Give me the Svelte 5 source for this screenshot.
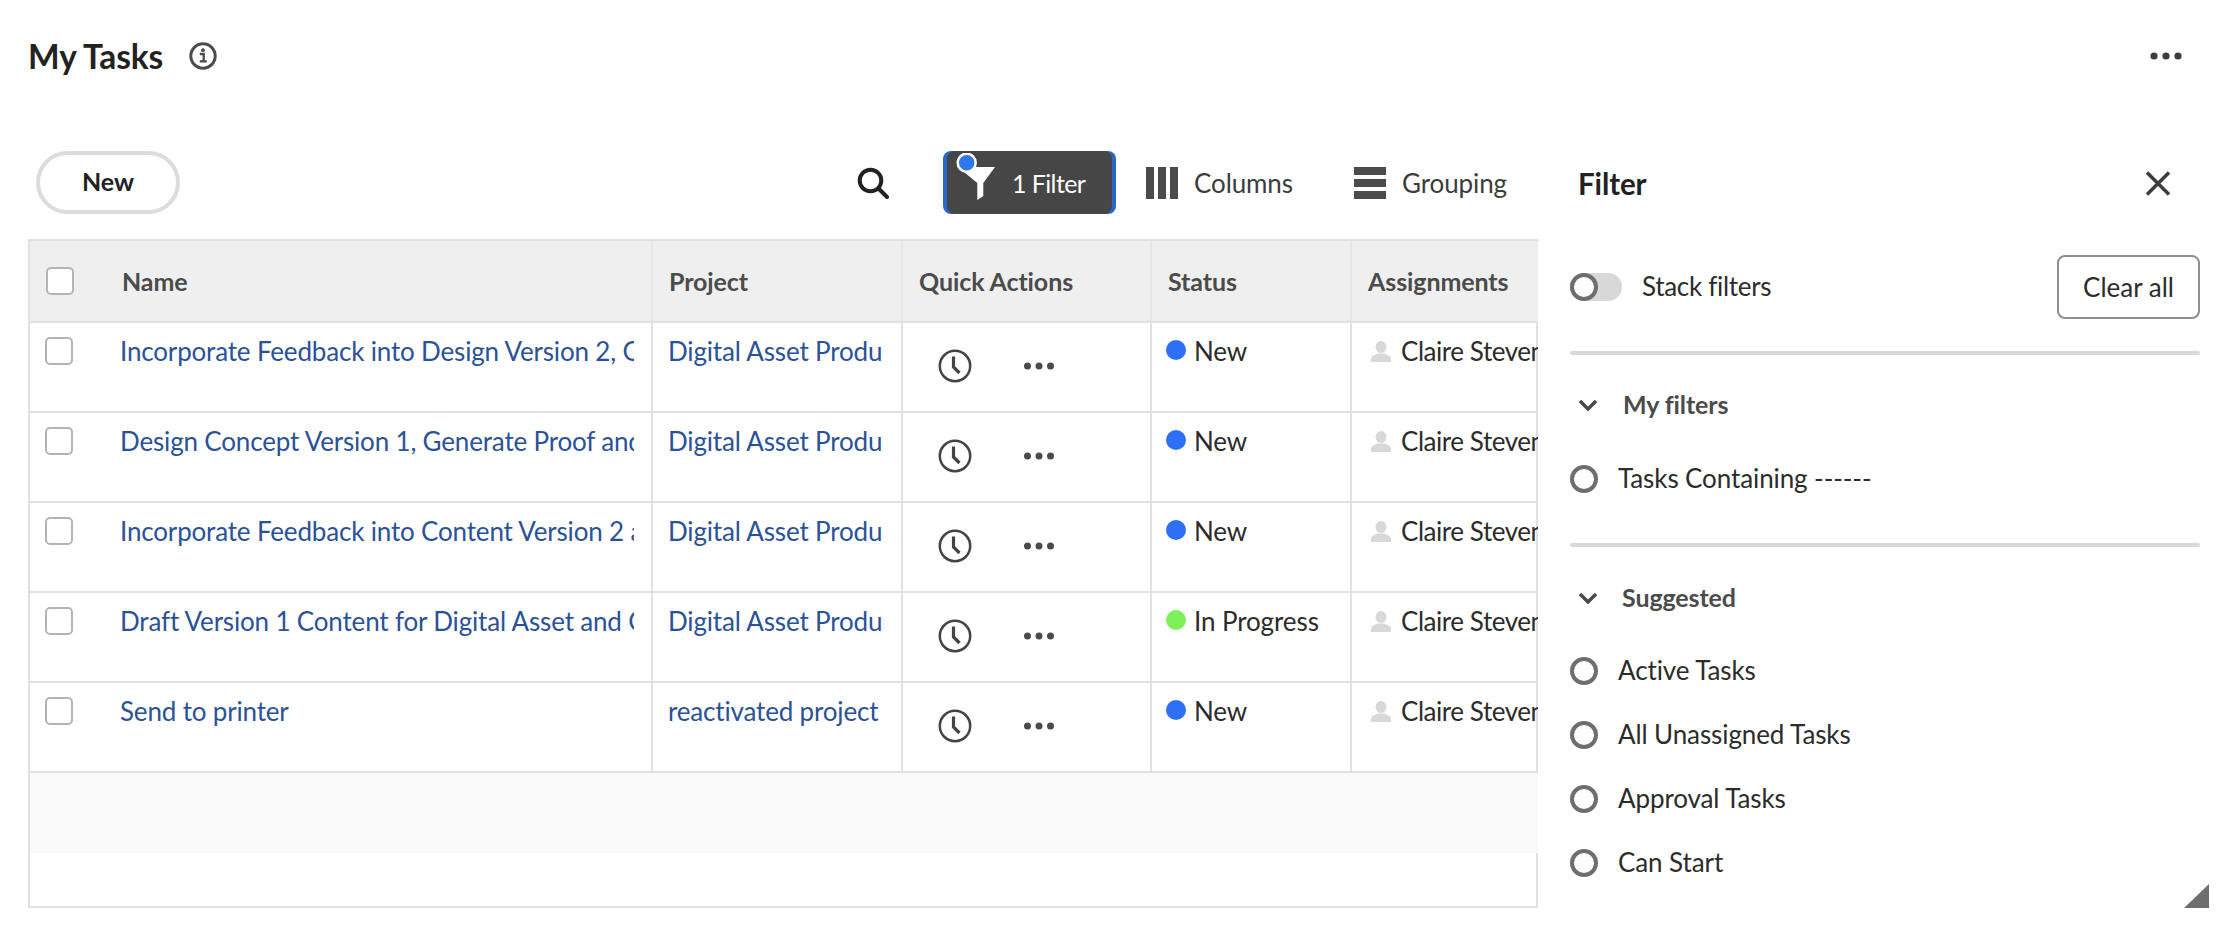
<script>
  const rows = [
    { name: "Incorporate Feedback into Design Version 2, Generate Proof", project: "Digital Asset Production", status: "New" },
    { name: "Design Concept Version 1, Generate Proof and Review", project: "Digital Asset Production", status: "New" },
    { name: "Incorporate Feedback into Content Version 2 and Finalize", project: "Digital Asset Production", status: "New" },
    { name: "Draft Version 1 Content for Digital Asset and Get Review", project: "Digital Asset Production", status: "In Progress" },
    { name: "Send to printer", project: "reactivated project", status: "New" }
  ];
  const suggested = ["Active Tasks", "All Unassigned Tasks", "Approval Tasks", "Can Start"];
</script>

<div class="page">
  <header class="top">
    <div class="heading">
      <h1>My Tasks</h1>
      <svg class="info" width="28" height="28" viewBox="0 0 28 28" fill="none" stroke="#4b4b4b">
        <circle cx="14" cy="14" r="12.200" stroke-width="3" />
        <path d="M10.800 12h3.900v7M10.800 19.400h7" stroke-width="2.300" />
        <circle cx="14" cy="8.200" r="1.900" fill="#4b4b4b" stroke="none" />
      </svg>
    </div>
    <svg class="more" width="32" height="8" viewBox="0 0 32 8" fill="#3c3c3c">
      <circle cx="4" cy="4" r="3.6" /><circle cx="16" cy="4" r="3.6" /><circle cx="28" cy="4" r="3.6" />
    </svg>
  </header>

  <div class="body">
    <main class="main">
      <div class="toolbar">
        <button class="new">New</button>
        <div class="tools">
          <svg class="search" width="32" height="32" viewBox="0 0 32 32" fill="none" stroke="#222" stroke-width="4">
            <circle cx="13.5" cy="13.5" r="10.8" />
            <path d="M21.5 21.5 30 30" stroke-linecap="round" />
          </svg>
          <div class="filter-btn">
            <div class="filter-inner">
              <svg class="funnel" width="42" height="50" viewBox="0 0 42 50">
                <path d="M3 14h37L28.300 30v13l-6 4V30z" fill="#fff" />
                <circle cx="11.700" cy="9.700" r="9" fill="#2e77ee" stroke="#fff" stroke-width="2.500" />
              </svg>
              <span>1 Filter</span>
            </div>
          </div>
          <div class="tool columns">
            <svg width="32" height="32" viewBox="0 0 32 32" fill="#4b4b4b">
              <rect x="0" width="8" height="32" /><rect x="12" width="8" height="32" /><rect x="24" width="8" height="32" />
            </svg>
            <span>Columns</span>
          </div>
          <div class="tool grouping">
            <svg width="32" height="32" viewBox="0 0 32 32" fill="#4b4b4b">
              <rect y="0" width="32" height="8" /><rect y="12" width="32" height="8" /><rect y="24" width="32" height="8" />
            </svg>
            <span>Grouping</span>
          </div>
        </div>
      </div>

      <div class="table-clip">
        <div class="table">
          <div class="row head">
            <div class="cell first"><span class="check"></span><span class="label">Name</span></div>
            <div class="cell">Project</div>
            <div class="cell">Quick Actions</div>
            <div class="cell">Status</div>
            <div class="cell">Assignments</div>
          </div>
          {#each rows as row}
            <div class="row">
              <div class="cell first">
                <span class="check"></span>
                <a class="link" href="#task">{row.name}</a>
              </div>
              <div class="cell project"><a class="link" href="#project">{row.project}</a></div>
              <div class="cell actions">
                <svg width="34" height="34" viewBox="0 0 34 34" fill="none" stroke="#444">
                  <circle cx="17" cy="17" r="15.200" stroke-width="2.500" />
                  <path d="M15.500 7.500v10.500l6 6" stroke-width="3.200" />
                </svg>
                <svg class="dots" width="32" height="8" viewBox="0 0 32 8" fill="#4b4b4b">
                  <circle cx="4.500" cy="4" r="3.500" /><circle cx="16" cy="4" r="3.500" /><circle cx="27.500" cy="4" r="3.500" />
                </svg>
              </div>
              <div class="cell status">
                <span class="dot" class:green={row.status === "In Progress"}></span>{row.status}
              </div>
              <div class="cell assignee">
                <svg width="20" height="21" viewBox="0 0 20 21" fill="#d8d8d8">
                  <ellipse cx="10" cy="6" rx="5.500" ry="6" />
                  <path d="M0 21v-3c0-3 4-4 6.500-5.500h7C16 14 20 15 20 18v3z" />
                </svg>
                Claire Stevens
              </div>
            </div>
          {/each}
          <div class="band"></div>
        </div>
      </div>
    </main>

    <aside class="panel">
      <div class="panel-head">
        <h2>Filter</h2>
        <svg width="26" height="25" viewBox="0 0 26 25" fill="none" stroke="#3c3c3c" stroke-width="3.500">
          <path d="M2 1.500 24 23.500M24 1.500 2 23.500" />
        </svg>
      </div>
      <div class="stack-row">
        <span class="toggle"><span class="knob"></span></span>
        <span class="stack-label">Stack filters</span>
        <button class="clear">Clear all</button>
      </div>

      <div class="rule"></div>
      <div class="section-title">
        <svg width="20" height="12" viewBox="0 0 20 12" fill="none" stroke="#4b4b4b" stroke-width="3.500">
          <path d="M2 2l8 8 8-8" />
        </svg>
        <span>My filters</span>
      </div>
      <div class="radios">
        <div class="radio-item"><span class="radio"></span><span class="radio-text">Tasks Containing ------</span></div>
      </div>

      <div class="rule"></div>
      <div class="section-title second">
        <svg width="20" height="12" viewBox="0 0 20 12" fill="none" stroke="#4b4b4b" stroke-width="3.500">
          <path d="M2 2l8 8 8-8" />
        </svg>
        <span>Suggested</span>
      </div>
      <div class="radios">
        {#each suggested as item}
          <div class="radio-item"><span class="radio"></span><span class="radio-text">{item}</span></div>
        {/each}
      </div>
      <span class="resize"></span>
    </aside>
  </div>
</div>

<style>
  :global(body) {
    margin: 0;
    background: #fff;
    overflow: hidden;
  }

  .page {
    width: 2230px;
    height: 932px;
    overflow: hidden;
    font-family: "Lato", "Open Sans", sans-serif;
    font-size: 26px;
    letter-spacing: -0.1px;
    color: #2c2c2c;
  }

  .top {
    height: 112px;
    display: flex;
    align-items: center;
    justify-content: space-between;
    padding: 0 48px 0 28px;
  }
  .heading {
    display: flex;
    align-items: center;
    gap: 26px;
  }
  h1 {
    margin: 0;
    font-size: 33.5px;
    font-weight: 700;
    color: #222;
  }

  .body {
    margin-top: 39px;
    display: grid;
    grid-template-columns: 1538px 692px;
  }

  .main {
    padding-left: 28px;
    min-width: 0;
  }

  .toolbar {
    height: 63px;
    margin-bottom: 25px;
    padding-right: 29px;
    display: flex;
    align-items: center;
    justify-content: space-between;
  }
  .new {
    margin-left: 8px;
    width: 144px;
    height: 63px;
    padding-bottom: 4px;
    border: 4px solid #dcdcdc;
    border-radius: 32px;
    background: #fff;
    font: 700 25px "Lato", sans-serif;
    color: #222;
  }
  .tools {
    display: flex;
    align-items: center;
  }
  .filter-btn {
    margin-left: 54px;
    width: 173px;
    height: 63px;
    padding: 0 4px;
    box-sizing: border-box;
    background: #2a66c8;
    border-radius: 8px;
    overflow: hidden;
  }
  .filter-inner {
    height: 100%;
    background: #464646;
    border-radius: 8px;
    color: #fff;
    display: flex;
    align-items: center;
    position: relative;
    padding-left: 65px;
    box-sizing: border-box;
    font-size: 25px;
    letter-spacing: -0.6px;
  }
  .funnel {
    position: absolute;
    left: 8px;
    top: 2px;
  }
  .tool {
    display: flex;
    align-items: center;
    gap: 16px;
    color: #3c3c3c;
  }
  .columns {
    margin-left: 30px;
    width: 176px;
  }
  .grouping {
    margin-left: 32px;
    width: 155px;
  }

  .table-clip {
    overflow: hidden;
  }
  .table {
    height: 669px;
    box-sizing: border-box;
    border: 2px solid #e1e1e1;
  }
  .row {
    display: grid;
    grid-template-columns: 623px 250px 249px 200px 300px;
    height: 90px;
    box-sizing: border-box;
    border-bottom: 2px solid #e1e1e1;
    margin-right: -2px;
    overflow: hidden;
  }
  .row.head {
    height: 82px;
    background: #efefef;
    font-weight: 700;
    font-size: 25px;
    color: #4b4b4b;
    align-items: stretch;
  }
  .cell {
    border-right: 2px solid #e1e1e1;
    padding: 10px 14px 0 15px;
    white-space: nowrap;
    overflow: hidden;
    box-sizing: border-box;
    line-height: 36px;
    min-width: 0;
  }
  .head .cell {
    padding-top: 22px;
    padding-left: 16px;
    border-right-color: #e6e6e6;
  }
  .cell:last-child {
    border-right: 0;
  }
  .cell.first {
    padding-left: 15px;
    padding-right: 17px;
    display: flex;
  }
  .head .cell.first {
    padding-left: 16px;
  }
  .cell.project {
    padding-right: 19px;
  }
  .check {
    flex: none;
    width: 28px;
    height: 28px;
    margin-top: 4px;
    box-sizing: border-box;
    border: 2px solid #b4b4b4;
    border-radius: 5px;
    background: #fff;
  }
  .label {
    margin-left: 48px;
  }
  .link {
    color: #2b5297;
    text-decoration: none;
    display: block;
    overflow: hidden;
    letter-spacing: -0.17px;
  }
  .first .link {
    margin-left: 47px;
  }
  .actions {
    display: flex;
    align-items: flex-start;
    gap: 51px;
    padding: 26px 0 0 35px;
  }
  .dots {
    margin-top: 13px;
  }
  .status {
    display: flex;
    align-items: flex-start;
    padding-left: 14px;
    color: #2c2c2c;
  }
  .dot {
    flex: none;
    width: 20px;
    height: 20px;
    margin: 7px 8px 0 0;
    border-radius: 50%;
    background: #2e6ff7;
  }
  .dot.green {
    background: #7ef15a;
  }
  .assignee {
    padding-left: 19px;
    display: flex;
    align-items: flex-start;
    gap: 10px;
    letter-spacing: -0.45px;
  }
  .assignee svg {
    flex: none;
    margin-top: 8px;
  }
  .band {
    height: 80px;
    background: #f9f9f9;
    margin-right: -2px;
    position: relative;
  }

  .panel {
    position: relative;
    height: 781px;
    padding: 0 30px 0 32px;
    background: #fff;
  }
  .panel-head {
    height: 68px;
    margin-bottom: 36px;
    box-sizing: border-box;
    padding: 0 29px 4px 8px;
    display: flex;
    align-items: center;
    justify-content: space-between;
  }
  h2 {
    margin: 0;
    font-size: 29.5px;
    font-weight: 700;
    color: #222;
  }
  .stack-row {
    display: flex;
    align-items: center;
    height: 64px;
  }
  .toggle {
    width: 52px;
    height: 28px;
    border-radius: 14px;
    background: #d8d8d8;
  }
  .knob {
    display: block;
    width: 28px;
    height: 28px;
    box-sizing: border-box;
    border: 4px solid #6e6e6e;
    border-radius: 50%;
    background: #fff;
  }
  .stack-label {
    margin: 0 0 2px 20px;
    letter-spacing: -0.3px;
  }
  .clear {
    margin-left: auto;
    width: 143px;
    height: 64px;
    background: #fff;
    border: 2px solid #8e8e8e;
    border-radius: 8px;
    font: 26px "Lato", sans-serif;
    color: #2c2c2c;
  }
  .rule {
    height: 4px;
    margin-top: 32px;
    border-radius: 2px;
    background: #d9d9d9;
  }
  .section-title {
    height: 40px;
    margin: 30px 0 22px;
    padding-left: 8px;
    display: flex;
    align-items: center;
    gap: 25px;
    font-weight: 700;
    font-size: 25px;
    color: #4b4b4b;
  }
  .section-title.second {
    margin: 31px 0 21px;
    gap: 24px;
  }
  .section-title span {
    margin-bottom: 2px;
  }
  .radio-item {
    height: 64px;
    display: flex;
    align-items: center;
  }
  .radio-text {
    margin-bottom: 3px;
  }
  .radio {
    flex: none;
    width: 28px;
    height: 28px;
    margin-right: 20px;
    box-sizing: border-box;
    border: 4px solid #6e6e6e;
    border-radius: 50%;
  }
  .resize {
    position: absolute;
    right: 21px;
    bottom: 24px;
    width: 25px;
    height: 24px;
    background: #6e6e6e;
    clip-path: polygon(100% 0, 100% 100%, 0 100%);
  }
</style>
